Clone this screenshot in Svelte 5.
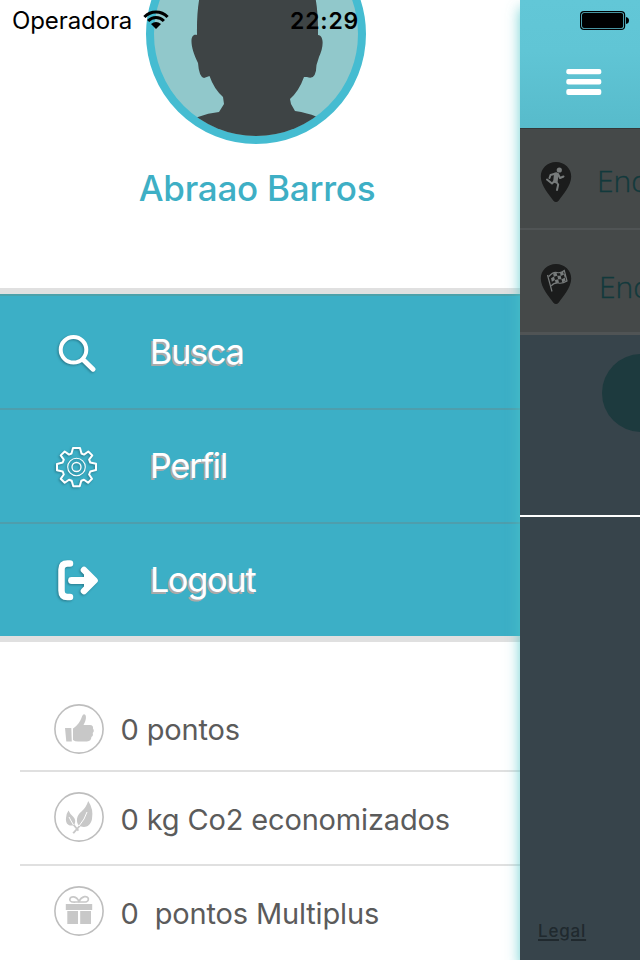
<script>
  const menu = [
    { id: 'search', label: 'Busca' },
    { id: 'gear', label: 'Perfil' },
    { id: 'logout', label: 'Logout' }
  ];
  const stats = [
    { id: 'like', label: '0 pontos' },
    { id: 'leaf', label: '0 kg Co2 economizados' },
    { id: 'gift', label: '0  pontos Multiplus' }
  ];
</script>

<div class="screen">
  <aside class="drawer">
    <section class="profile">
      <div class="avatar">
        <svg width="204" height="204" viewBox="154 -68 204 204">
          <path fill="#3e4445" d="M197 35 C196 -24 212 -50 257 -50 C302 -50 319 -24 318 35 C325 36 323 49 319 57 L316.500 65 Q316 81 307 77 L304 77 Q299 91 290 99 L291 104 L295 111 Q308 113 316 116.500 Q328 120 334 125 L344 150 H168 L179 125 Q189 119 198 117 Q208 113 219 112 L224 104 L223 97 Q214 89 209.500 76 L204 78 Q199 77 198 63 C190 47 189 33 197 35 Z" />
        </svg>
      </div>
      <h1>Abraao Barros</h1>
    </section>

    <nav class="menu">
      {#each menu as item (item.id)}
        <a class="item">
          <span class="icon">
            {#if item.id === 'search'}
              <svg width="46" height="46" viewBox="0 0 46 46" fill="none" stroke="#fff" stroke-linecap="round">
                <circle cx="19.5" cy="20.8" r="12.8" stroke-width="4" />
                <path d="M30 31.5 L39 40.2" stroke-width="5" />
              </svg>
            {:else if item.id === 'gear'}
              <svg width="46" height="46" viewBox="-22.5 -24 46 46" fill="none" stroke="#fff" stroke-linejoin="round">
                <path stroke-width="2" d="M-3.5 -19 H3.5 L5 -13.5 L7.5 -12.4 L11.8 -15.5 L15.8 -11.6 L12.6 -7.3 L13.8 -4.5 L19.5 -3.2 V3 L13.8 4.500 L12.6 7.5 L15.5 11.8 L11.6 15.8 L7.5 12.7 L4.8 13.8 L3.2 19.2 H-3.2 L-4.8 13.8 L-7.5 12.7 L-11.8 15.8 L-15.8 11.8 L-12.7 7.5 L-13.8 4.5 L-19.5 3.2 V-3 L-13.8 -4.5 L-12.7 -7.3 L-15.8 -11.6 L-11.8 -15.5 L-7.5 -12.4 L-5 -13.5 Z" />
                <circle r="8.8" stroke-width="1.1" />
                <circle r="4.5" stroke-width="1.3" />
              </svg>
            {:else}
              <svg width="46" height="46" viewBox="0 0 46 46" fill="none" stroke="#fff" stroke-linecap="round">
                <path d="M16 6.500 H13.500 Q7.500 6.500 7.500 12.500 V33.500 Q7.500 40 13.500 40 H16" stroke-width="6.500" />
                <path d="M17.500 23.5 H36" stroke-width="6.8" />
                <path d="M30 13 L40.5 23.5 L30 34" stroke-width="6.6" stroke-linejoin="round" />
                <path d="M31 16 L38 23.500 L31 31 Z" fill="#fff" stroke-width="2" />
              </svg>
            {/if}
          </span>
          <span class="label {item.id}">{item.label}</span>
        </a>
      {/each}
    </nav>

    <ul class="stats">
      {#each stats as stat (stat.id)}
        <li class={stat.id}>
          <svg width="50" height="50" viewBox="0 0 50 50" fill="#c8c8c8">
            <circle cx="25" cy="25" r="24.1" fill="#fff" stroke="#bebebe" stroke-width="1.6" />
            {#if stat.id === 'like'}
              <path d="M11 24 H17.3 L17.8 37.5 H12.3 Z" />
              <path d="M19 24.5 C24 21 26 18 28 12.5 Q29.5 8.8 31.4 11 C32.8 13.5 31.3 18 29.5 21 H36 Q39.5 21.2 39 24.5 Q40.8 27 38.7 29 Q39.6 31.8 37.4 33 Q37.3 37 33 37.5 H24 Q21 37.5 19 36 Z" />
            {:else if stat.id === 'leaf'}
              <path d="M34.2 9 Q39.7 17 38 27 C36.5 34.5 31 36 26.5 34.2 L20 41.8 L18.4 40.7 L25 33.6 C21.5 30 22.6 22.8 27.5 19.4 Q32 16 34.2 9 Z" />
              <path d="M14.5 18.5 Q16 22 19 24.5 Q22.5 28 20.5 32.6 L25 38 L23.8 39.2 L19 33.4 C14 34.5 11.4 31 12 26 Q12.5 21 14.5 18.5 Z" />
              <path d="M25 34 Q31 27 33 20 M19.5 33 Q17 29 15 25" fill="none" stroke="#fff" stroke-width="1" />
            {:else}
              <path d="M13.3 25 H24 V38 H13.3 Z M26.2 25 H37 V38 H26.2 Z" />
              <path d="M11.8 18 H38.2 V24 H11.8 Z" />
              <path d="M25 16 C20 15.8 15.5 17 15.8 13.4 C16.5 9.4 22.5 10 25 15.5 C27.5 10 33.7 9 34.4 13 C34.5 17 30 15.8 25 16 Z" fill="none" stroke="#c8c8c8" stroke-width="1.7" />
            {/if}
          </svg>
          <span>{stat.label}</span>
        </li>
      {/each}
    </ul>
  </aside>

  <main class="page">
    <header>
      <svg width="36" height="28" viewBox="0 0 36 28" fill="#fff">
        <rect x="0.3" y="1" width="35" height="5.2" rx="2" />
        <rect x="0.3" y="11" width="35" height="5.5" rx="2" />
        <rect x="0.3" y="21" width="35" height="6" rx="2" />
      </svg>
    </header>
    <div class="field origin">
      <svg width="32" height="42" viewBox="0 0 32 42">
        <path fill="#1b1c1c" d="M16 1 C7.2 1 .8 7.5 .8 15.5 C.8 25 9.5 34 13.2 39.5 Q16 42.5 18.8 39.5 C22.5 34 31.2 25 31.2 15.5 C31.2 7.5 24.8 1 16 1 Z" />
        <circle cx="19.3" cy="9" r="2.6" fill="#777b7b" />
        <path fill="none" stroke="#777b7b" stroke-linecap="round" stroke-linejoin="round" d="M16.2 13.5 L15.5 20" stroke-width="4.5" />
        <path fill="none" stroke="#777b7b" stroke-width="2" stroke-linecap="round" stroke-linejoin="round" d="M15 12.8 L10.5 14 L9.5 17 M18 13 L20 17 L23.5 15.5 M14.5 20 L12 22.5 L7 18.5 M16 20.5 L18.2 23.5 L17 29" />
      </svg>
      <span>End</span>
    </div>
    <div class="field target">
      <svg width="32" height="42" viewBox="0 0 32 42">
        <path fill="#1b1c1c" d="M16 1 C7.2 1 .8 7.5 .8 15.5 C.8 25 9.5 34 13.2 39.5 Q16 42.5 18.8 39.5 C22.5 34 31.2 25 31.2 15.5 C31.2 7.5 24.8 1 16 1 Z" />
        <g fill="none" stroke="#777b7b" stroke-width="1.2">
          <path d="M7.5 12 L12 28.5 M8.8 13.5 Q13 8.5 17 9.5 Q21 10.5 24.3 7.5 L27 18 Q22 21 18.5 20 Q14 19.5 11.2 23" />
        </g>
        <path fill="#777b7b" d="M13 10.5 l3.5 -1 l.8 3.2 l-3.4 1 Z M20 9.8 l3 -1.5 l.9 3.4 l-3.2 1.2 Z M17.3 12.8 l3.4 0 l.8 3.4 l-3.4 0 Z M11 15.2 l3 -1.6 l.9 3.4 l-3 1.7 Z M14.9 17 l3.3 -.8 l.8 3.6 l-3.3 .3 Z M21.5 16.2 l3.3 -1.4 l.8 3 l-3.3 1.8 Z M23.9 11.6 l1.4 -.6 l.8 3 l-1.4 .7 Z" />
      </svg>
      <span>End</span>
    </div>
    <div class="action"><i></i></div>
    <div class="map"><a class="legal">Legal</a></div>
  </main>

  <div class="status">
    <span class="carrier">Operadora</span>
    <svg class="wifi" width="26" height="20" viewBox="0 0 26 20" fill="none" stroke="#000">
      <path d="M1.4 7 C8 .3 18 .3 24.6 7" stroke-width="3.1" />
      <path d="M5.1 11 C9.6 6.4 16.4 6.4 20.9 11" stroke-width="3" />
      <path d="M8 14 Q13 9.8 18 14 L13 19 Z" fill="#000" stroke="none" />
    </svg>
    <span class="time">22:29</span>
    <svg class="battery" width="50" height="20" viewBox="0 0 50 20">
      <rect x=".6" y=".6" width="44" height="17.8" rx="3.5" fill="none" stroke="#000" stroke-width="1.2" />
      <rect x="2" y="2" width="41.2" height="15" rx="2" />
      <path d="M46 6 Q49 6.5 49 9.5 Q49 12.5 46 13 Z" />
    </svg>
  </div>
</div>

<style>
  .screen {
    position: relative;
    display: flex;
    width: 640px;
    height: 960px;
    overflow: hidden;
    background: #fff;
    font-family: Inter, "Liberation Sans", sans-serif;
  }
  .drawer {
    width: 520px;
    flex: none;
    display: flex;
    flex-direction: column;
  }
  .profile {
    height: 288px;
    display: flex;
    flex-direction: column;
    align-items: center;
    padding-right: 8px;
    box-sizing: border-box;
  }
  .avatar {
    width: 204px;
    height: 204px;
    flex: none;
    margin-top: -76px;
    border: 8px solid #45bcd1;
    border-radius: 50%;
    overflow: hidden;
    background: #91c8cb;
  }
  .avatar svg { display: block; }
  h1 {
    margin: 23px 0 0 2px;
    font-size: 35px;
    line-height: 42px;
    font-weight: 500;
    letter-spacing: -.25px;
    color: #3eafc5;
    white-space: nowrap;
  }
  .menu {
    border: solid #e0e0e0;
    border-width: 6px 0;
    background: #3cafc6;
    box-shadow: inset 0 2px 0 #4ca1aa;
  }
  .item {
    display: flex;
    align-items: center;
    height: 112px;
    padding-left: 54px;
    border-bottom: 2px solid #4e9ead;
  }
  .item:first-child { height: 112px; padding-top: 2px; }
  .item:last-child { border: 0; }
  .icon {
    width: 96px;
    height: 46px;
    filter: drop-shadow(-1px 1px 1px rgba(30, 90, 105, .6));
  }
  .label {
    font-size: 34px;
    line-height: 44px;
    letter-spacing: -1.1px;
    color: #fff;
    text-shadow: -2px 2px 0 #aaa;
  }
  .stats {
    list-style: none;
    margin: 0;
    padding: 0 0 0 20px;
    font-size: 29px;
    letter-spacing: -.15px;
    color: #5b5b5b;
  }
  .stats li {
    display: flex;
    align-items: flex-start;
    height: 94px;
    padding: 20px 0 0 34px;
    border-bottom: 2px solid #e0e0e0;
    white-space: pre;
    box-sizing: border-box;
  }
  .stats li.like { height: 130px; padding-top: 62px; }
  .stats li.gift { border: 0; }
  .stats svg { flex: none; margin-right: 16.500px; }
  .stats span { line-height: 50px; padding-top: 3px; }
  .stats .like span { padding-top: 1px; }
  .page {
    position: relative;
    width: 120px;
    height: 960px;
    display: flex;
    flex-direction: column;
    background: #37444b;
    box-shadow: 0 8px 13px rgba(75, 198, 200, .8);
  }
  header {
    height: 128px;
    box-sizing: border-box;
    padding: 68px 0 0 46px;
    background: linear-gradient(#62c7d7 0, #60c5d5 40%, #57bbcb);
  }
  .field {
    display: flex;
    box-sizing: border-box;
    overflow: hidden;
    white-space: nowrap;
    background: #454949;
    border-bottom: 2px solid #505455;
    padding: 33px 0 0 20px;
    height: 102px;
    font: 300 30px/42px "Open Sans", sans-serif;
    color: #12393c;
    -webkit-text-stroke: .3px #12393c;
  }
  .field svg { flex: none; }
  .field span { margin: -1px 0 0 25px; }
  .origin { border-top: 1px solid #343838; padding-top: 32px; }
  .target { height: 105px; border-bottom-width: 3px; }
  .target span { margin: 3px 0 0 27px; }
  .action {
    height: 180px;
    padding: 19px 0 0 82px;
    box-sizing: border-box;
    overflow: hidden;
  }
  .action i {
    display: block;
    width: 78px;
    height: 78px;
    border-radius: 50%;
    background: #1d3a3e;
  }
  .map {
    flex: 1;
    border-top: 2px solid #fff;
    display: flex;
    align-items: flex-end;
    padding: 0 0 17px 18px;
  }
  .legal {
    font-size: 17px;
    line-height: 24px;
    font-weight: 500;
    letter-spacing: .8px;
    color: #20292e;
    text-decoration: underline;
    text-underline-offset: 2px;
    text-decoration-thickness: 2px;
    text-decoration-skip-ink: auto;
  }
  .status {
    position: absolute;
    inset: 0 0 auto 0;
    height: 41px;
    display: flex;
    align-items: center;
    padding-left: 12px;
    font-size: 24px;
    line-height: 30px;
    color: #000;
  }
  .carrier { width: 131px; letter-spacing: -.1px; }
  .wifi { margin-top: -1px; }
  .time { width: 290px; margin-left: 121px; font-weight: 600; font-size: 23px; letter-spacing: .8px; }
</style>
